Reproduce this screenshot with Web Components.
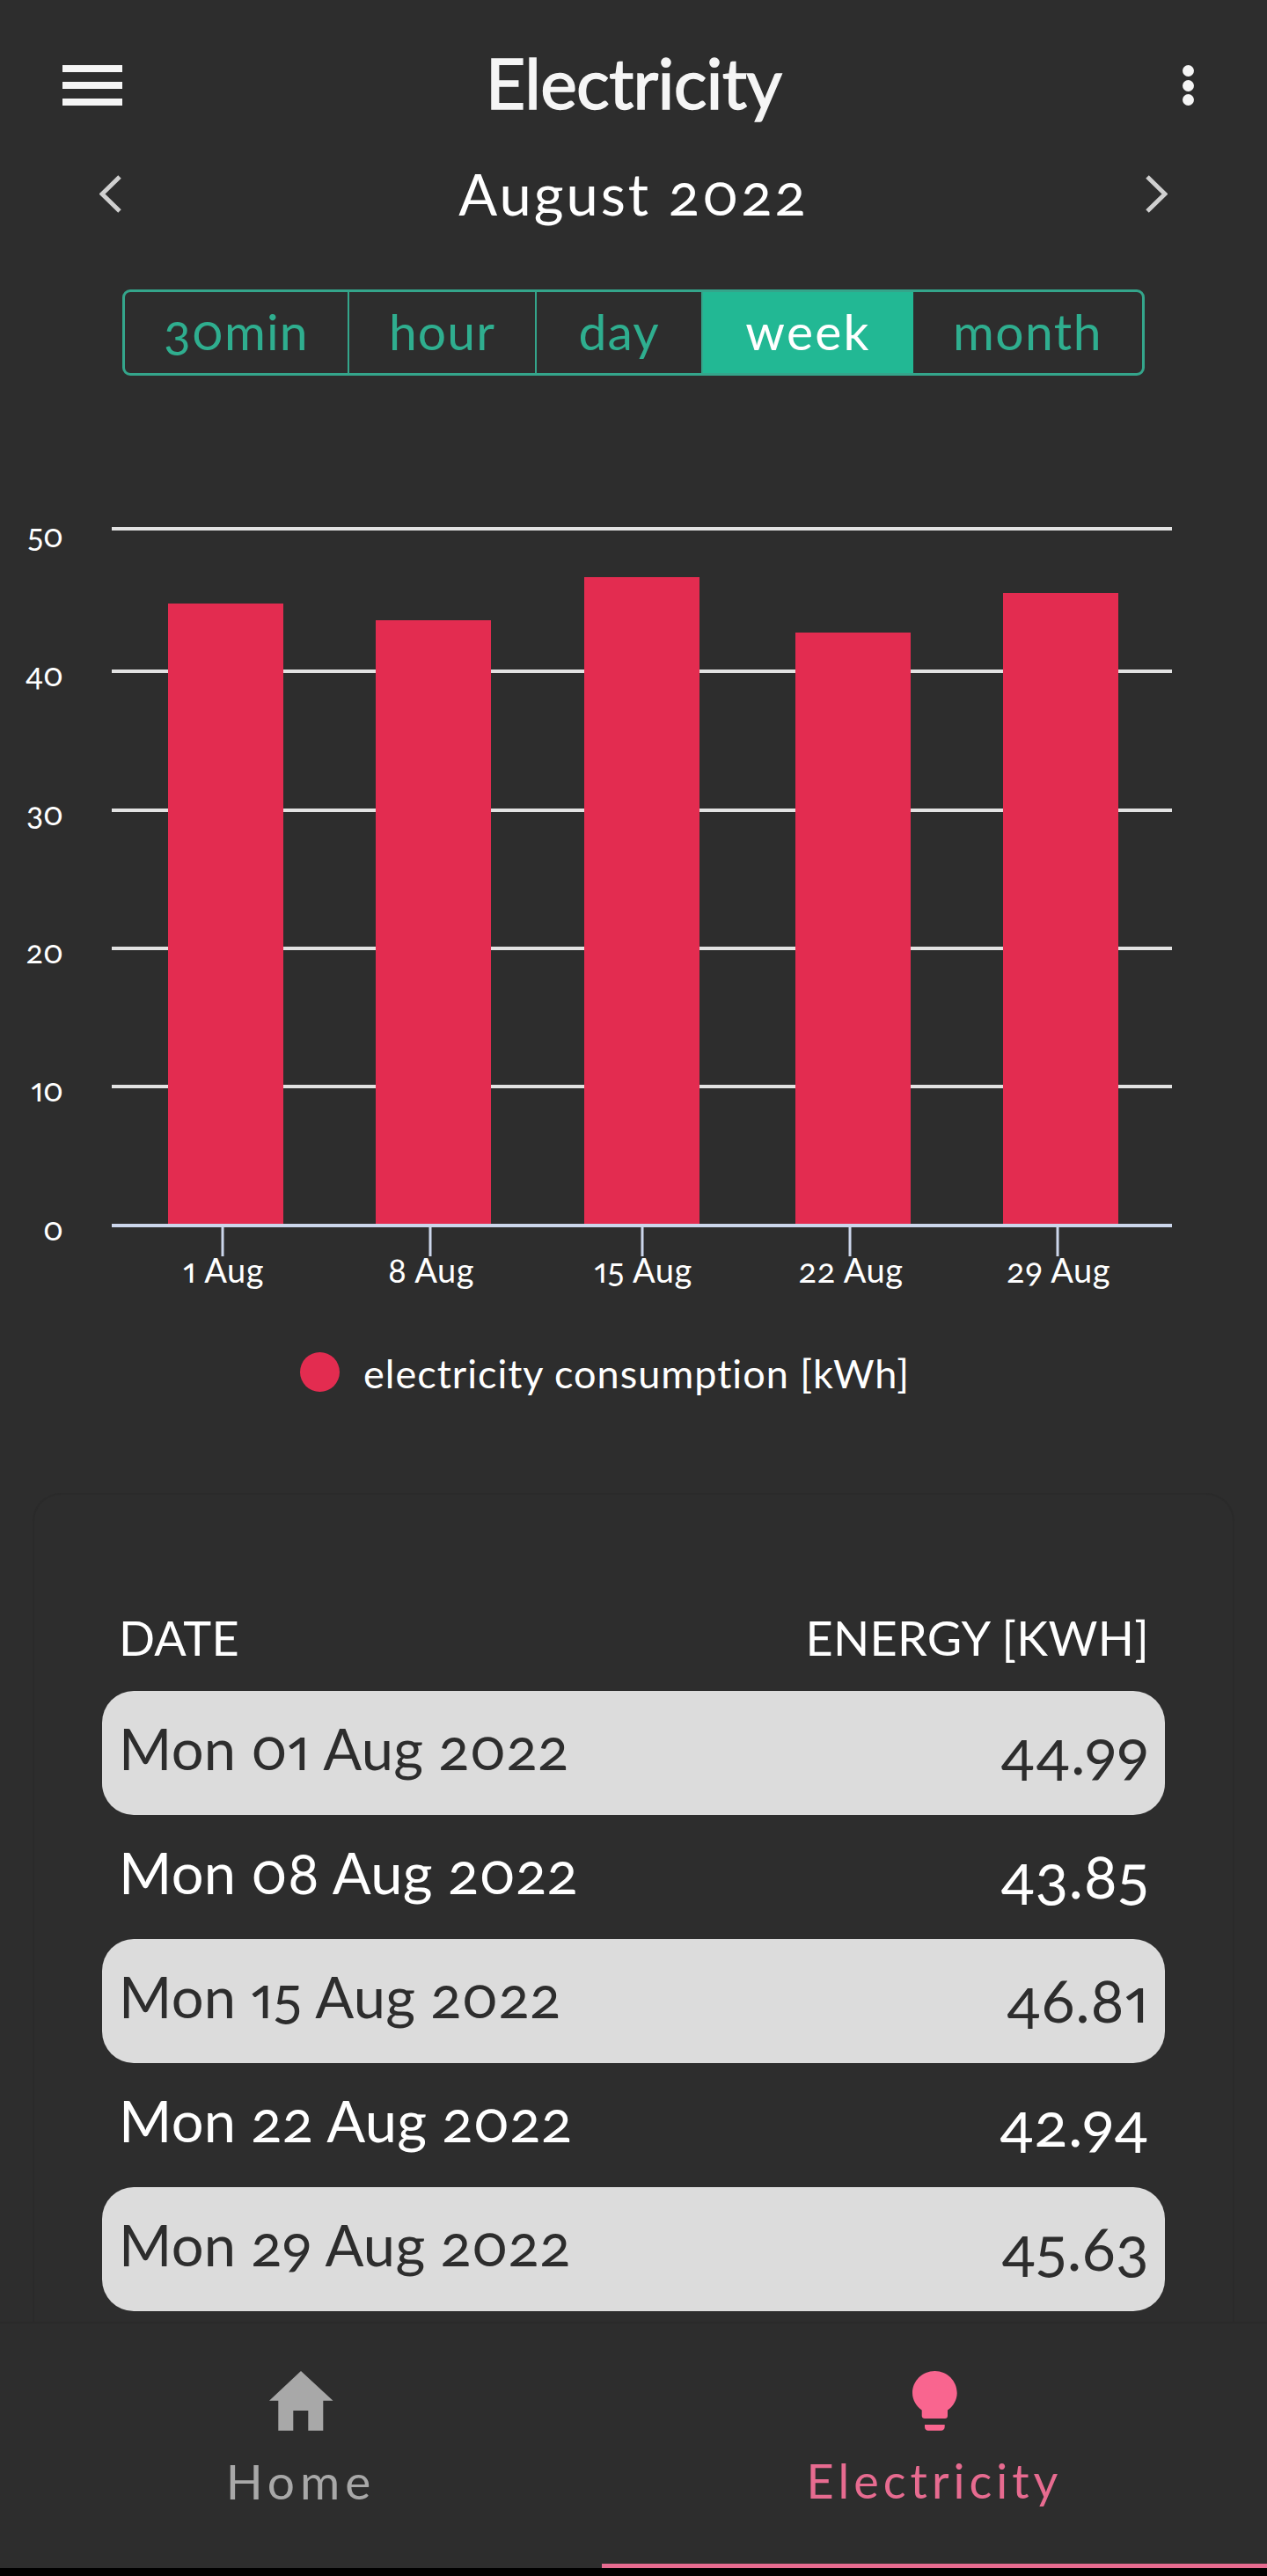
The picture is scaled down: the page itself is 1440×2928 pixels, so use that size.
<!DOCTYPE html>
<html>
<head>
<meta charset="utf-8">
<title>Electricity</title>
<style>
  html, body { margin: 0; padding: 0; background: #000; }
  body { font-family: Lato, "Open Sans", sans-serif; font-feature-settings: "onum", "pnum"; width: 1440px; height: 2928px; overflow: hidden; }
</style>
</head>
<body>
<app-shell>
  <top-bar>Electricity</top-bar>
  <month-nav>August 2022</month-nav>
  <seg-tabs>
    <seg-tab width="255">30min</seg-tab>
    <seg-tab width="213">hour</seg-tab>
    <seg-tab width="189">day</seg-tab>
    <seg-tab width="239" active>week</seg-tab>
    <seg-tab width="260" last>month</seg-tab>
  </seg-tabs>
  <energy-chart></energy-chart>
  <energy-table>
    <energy-row date="Mon 01 Aug 2022" value="44.99" odd></energy-row>
    <energy-row date="Mon 08 Aug 2022" value="43.85"></energy-row>
    <energy-row date="Mon 15 Aug 2022" value="46.81" odd></energy-row>
    <energy-row date="Mon 22 Aug 2022" value="42.94"></energy-row>
    <energy-row date="Mon 29 Aug 2022" value="45.63" odd></energy-row>
  </energy-table>
  <bottom-nav></bottom-nav>
</app-shell>

<script>
class AppShell extends HTMLElement {
  constructor() {
    super();
    this.attachShadow({ mode: 'open' });
    this.shadowRoot.innerHTML = `
      <style>
        :host {
          display: flex;
          flex-direction: column;
          width: 1440px;
          height: 2919px;
          background: #2d2d2d;
          color: #fff;
          overflow: hidden;
        }
      </style>
      <slot></slot>
    `
  }
}
customElements.define('app-shell', AppShell);

class TopBar extends HTMLElement {
  constructor() {
    super();
    this.attachShadow({ mode: 'open' });
    this.shadowRoot.innerHTML = `
      <style>
        :host {
          display: grid;
          grid-template-columns: 1fr auto 1fr;
          align-items: center;
          box-sizing: border-box;
          height: 170px;
          padding: 24px 83px 0 71px;
        }
        .burger { display: flex; flex-direction: column; justify-content: space-between; width: 68px; height: 46px; }
        .burger i { display: block; height: 8px; background: #f5f5f5; }
        .title {
          font-size: 79px;
          letter-spacing: -0.8px;
          -webkit-text-stroke: 1.4px #f5f5f5;
          color: #f5f5f5;
          line-height: 140px;
          padding-bottom: 6px;
          margin-left: 12px;
        }
        .dots { display: flex; flex-direction: column; justify-content: space-between; height: 46px; justify-self: end; }
        .dots i { display: block; width: 13px; height: 13px; border-radius: 50%; background: #f5f5f5; }
      </style>
      <div class="burger"><i></i><i></i><i></i></div>
      <div class="title"><slot></slot></div>
      <div class="dots"><i></i><i></i><i></i></div>
    `
  }
}
customElements.define('top-bar', TopBar);

class MonthNav extends HTMLElement {
  constructor() {
    super();
    this.attachShadow({ mode: 'open' });
    this.shadowRoot.innerHTML = `
      <style>
        :host {
          display: flex;
          align-items: center;
          justify-content: space-between;
          box-sizing: border-box;
          height: 101px;
          padding: 0 113px;
        }
        svg { display: block; }
        .label { font-size: 65px; letter-spacing: 3px; line-height: 101px; }
      </style>
      <svg width="25" height="43" viewBox="0 0 25 43"><path d="M23 2 L3 21.500 L23 41" fill="none" stroke="#d0d0d0" stroke-width="5"/></svg>
      <div class="label"><slot></slot></div>
      <svg width="25" height="43" viewBox="0 0 25 43"><path d="M2 2 L22 21.500 L2 41" fill="none" stroke="#d0d0d0" stroke-width="5"/></svg>
    `
  }
}
customElements.define('month-nav', MonthNav);

class SegTabs extends HTMLElement {
  constructor() {
    super();
    this.attachShadow({ mode: 'open' });
    this.shadowRoot.innerHTML = `
      <style>
        :host {
          display: flex;
          box-sizing: border-box;
          width: 1162px;
          height: 98px;
          margin: 58px 0 0 139px;
          border: 3px solid #34a58b;
          border-radius: 9px;
          overflow: hidden;
        }
      </style>
      <slot></slot>
    `
  }
}
customElements.define('seg-tabs', SegTabs);

class SegTab extends HTMLElement {
  constructor() {
    super();
    this.attachShadow({ mode: 'open' });
    this.shadowRoot.innerHTML = `
      <style>
        :host {
          display: flex;
          align-items: center;
          justify-content: center;
          box-sizing: border-box;
          font-size: 57px;
          letter-spacing: 1.1px;
          color: #2fae8f;
          border-right: 2px solid #34a58b;
          padding-bottom: 4px;
        }
        :host([active]) { background: #22b894; color: #fff; border-right: 0; letter-spacing: 2.2px; }
        :host([last]) { border-right: 0; letter-spacing: 1.4px; }
      </style>
      <slot></slot>
    `
  }
  connectedCallback() {
    this.style.flex = `0 0 ${this.getAttribute('width')}px`;
  }
}
customElements.define('seg-tab', SegTab);

class EnergyChart extends HTMLElement {
  constructor() {
    super();
    this.attachShadow({ mode: 'open' });
    const gridY = [601, 763, 921, 1078, 1235];
    const yLabels = [[50, 622], [40, 780], [30, 938], [20, 1095], [10, 1252], [0, 1410]];
    const bars = [[191, 686], [427, 705], [664, 656], [904, 719], [1140, 674]];
    const ticks = [[253, '1 Aug'], [489, '8 Aug'], [730, '15 Aug'], [966, '22 Aug'], [1202, '29 Aug']];
    this.shadowRoot.innerHTML = `
      <style>
        :host { display: block; height: 1200px; margin-top: 13px; }
        svg { display: block; font-family: Lato, "Open Sans", sans-serif; }
        text { fill: #fff; }
      </style>
      <svg width="1440" height="1200" viewBox="0 440 1440 1200">
        ${gridY.map(y => `<rect x="127" y="${y - 2}" width="1205" height="4" fill="#e2e2e2"/>`).join('')}
        ${bars.map(([x, y]) => `<rect x="${x}" y="${y}" width="131" height="${1391 - y}" fill="#e32c50"/>`).join('')}
        <rect x="127" y="1391" width="1205" height="4" fill="#ccd6eb"/>
        ${ticks.map(([x]) => `<rect x="${x - 1.5}" y="1395" width="3" height="33" fill="#ccd6eb"/>`).join('')}
        ${yLabels.map(([v, y]) => `<text x="72" y="${y}" text-anchor="end" font-size="36">${v}</text>`).join('')}
        ${ticks.map(([x, t]) => `<text x="${x + 1}" y="1458" text-anchor="middle" font-size="38" letter-spacing="0.5">${t}</text>`).join('')}
        <circle cx="363.5" cy="1559.5" r="22.5" fill="#e32c50"/>
        <text x="413" y="1578" font-size="45" letter-spacing="1">electricity consumption [kWh]</text>
      </svg>
    `
  }
}
customElements.define('energy-chart', EnergyChart);

class EnergyTable extends HTMLElement {
  constructor() {
    super();
    this.attachShadow({ mode: 'open' });
    this.shadowRoot.innerHTML = `
      <style>
        :host {
          display: block;
          box-sizing: border-box;
          width: 1366px;
          height: 942px;
          margin: 57px 0 0 37px;
          padding: 103px 77px 0;
          border: solid #2a2a2a;
          border-width: 2px 2px 0;
          border-radius: 32px 32px 0 0;
          overflow: hidden;
        }
        .head {
          display: flex;
          justify-content: space-between;
          align-items: center;
          height: 118px;
          padding: 0 18px 2px 19px;
          font-size: 54px;
          letter-spacing: 0.3px;
        }
      </style>
      <div class="head"><span>DATE</span><span>ENERGY [KWH]</span></div>
      <slot></slot>
    `
  }
}
customElements.define('energy-table', EnergyTable);

class EnergyRow extends HTMLElement {
  constructor() {
    super();
    this.attachShadow({ mode: 'open' });
    this.shadowRoot.innerHTML = `
      <style>
        :host {
          display: flex;
          align-items: center;
          justify-content: space-between;
          box-sizing: border-box;
          height: 141px;
          padding: 0 18px 0 19px;
          border-radius: 36px;
          color: #fff;
        }
        :host([odd]) { background: #dcdcdc; color: #2d2d2d; }
        .date { font-size: 65px; letter-spacing: 0.3px; padding-bottom: 12px; }
        .value { font-size: 70px; letter-spacing: 0.5px; padding-bottom: 6px; }
      </style>
      <span class="date">${this.getAttribute('date')}</span>
      <span class="value">${this.getAttribute('value')}</span>
    `
  }
}
customElements.define('energy-row', EnergyRow);

class BottomNav extends HTMLElement {
  constructor() {
    super();
    this.attachShadow({ mode: 'open' });
    this.shadowRoot.innerHTML = `
      <style>
        :host {
          display: flex;
          box-sizing: border-box;
          width: 1440px;
          height: 280px;
          border-top: 2px solid #2a2a2a;
          background: #2d2d2d;
        }
        .tab {
          display: flex;
          flex-direction: column;
          align-items: center;
          box-sizing: border-box;
          padding-top: 54px;
          font-size: 54px;
          letter-spacing: 5px;
          color: #a8a8a8;
        }
        .home { flex: 0 0 684px; font-size: 55px; letter-spacing: 6px; }
        .elec { flex: 1; color: #e76b90; border-bottom: 5px solid #e76b90; }
        svg { display: block; margin-bottom: 24px; }
      </style>
      <div class="tab home">
        <svg width="73" height="68" viewBox="0 0 73 68"><path d="M36 0 L72.500 33.700 L61.300 33.700 L61.300 67.700 L44.300 67.700 L44.300 45 L27.300 45 L27.300 67.700 L10.300 67.700 L10.300 33.700 L0 33.700 Z" fill="#a8a8a8"/></svg>
        <span>Home</span>
      </div>
      <div class="tab elec">
        <svg width="51" height="68" viewBox="0 0 51 68"><path d="M25.500 0 C39.500 0 50.700 11.300 50.700 25 C50.700 33 46.500 40 40 44.500 L40 51 C40 52.800 38.800 54 37 54 L14 54 C12.200 54 10.700 52.800 10.700 51 L10.700 44.500 C4.500 40 0 33 0 25 C0 11.300 11.300 0 25.500 0 Z M14 61 L36.700 61 L36.700 63.500 C36.700 66 35 67.700 32.500 67.700 L18 67.700 C15.500 67.700 14 66 14 63.500 Z" fill="#f9658f"/></svg>
        <span>Electricity</span>
      </div>
    `
  }
}
customElements.define('bottom-nav', BottomNav);
</script>
</body>
</html>
